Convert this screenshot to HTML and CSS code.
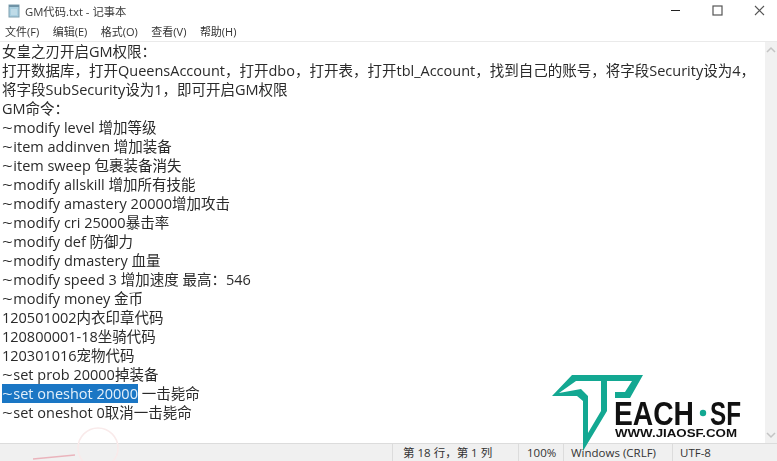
FILE: index.html
```html
<!DOCTYPE html>
<html lang="zh-CN">
<head>
  <meta charset="UTF-8">
  <title>GM代码.txt - 记事本</title>
  <link rel="stylesheet" href="styles.css">
</head>
<body>
  <div class="window">
    <div class="titlebar">
      <svg class="file-icon" width="12" height="14" viewBox="0 0 12 14">
        <rect x="1" y="1" width="10" height="12" fill="#a9cfe0" stroke="#7f9fb0" stroke-width="1"/>
        <path d="M1 1h10v2H1z" fill="#6f93a6"/>
        <path d="M3 6h6M3 8h6M3 10h6" stroke="#d5e8f0" stroke-width="1"/>
      </svg>
      <span class="title">GM代码.txt - 记事本</span>
      <div class="controls">
        <svg width="11" height="11" viewBox="0 0 11 11"><path d="M1 5.5h9" stroke="#222" stroke-width="1"/></svg>
        <svg width="11" height="11" viewBox="0 0 11 11"><rect x="1" y="1" width="9" height="9" fill="none" stroke="#555" stroke-width="1.2"/></svg>
        <svg width="11" height="11" viewBox="0 0 11 11"><path d="M1 1l9 9M10 1l-9 9" stroke="#555" stroke-width="1.1"/></svg>
      </div>
    </div>
    <div class="menu">
      <span>文件(F)</span>
      <span>编辑(E)</span>
      <span>格式(O)</span>
      <span>查看(V)</span>
      <span>帮助(H)</span>
    </div>
    <div class="main">
      <div class="text">
        <div>女皇之刃开启GM权限：</div>
        <div>打开数据库，打开QueensAccount，打开dbo，打开表，打开tbl_Account，找到自己的账号，将字段Security设为4，</div>
        <div>将字段SubSecurity设为1，即可开启GM权限</div>
        <div>GM命令：</div>
        <div><span class="tilde">~</span>modify level 增加等级</div>
        <div><span class="tilde">~</span>item addinven 增加装备</div>
        <div><span class="tilde">~</span>item sweep 包裹装备消失</div>
        <div><span class="tilde">~</span>modify allskill 增加所有技能</div>
        <div><span class="tilde">~</span>modify amastery 20000增加攻击</div>
        <div><span class="tilde">~</span>modify cri 25000暴击率</div>
        <div><span class="tilde">~</span>modify def 防御力</div>
        <div><span class="tilde">~</span>modify dmastery 血量</div>
        <div><span class="tilde">~</span>modify speed 3 增加速度 最高：546</div>
        <div><span class="tilde">~</span>modify money 金币</div>
        <div>120501002内衣印章代码</div>
        <div>120800001-18坐骑代码</div>
        <div>120301016宠物代码</div>
        <div><span class="tilde">~</span>set prob 20000掉装备</div>
        <div><span class="selected"><span class="tilde">~</span>set oneshot 20000</span> 一击毙命</div>
        <div><span class="tilde">~</span>set oneshot 0取消一击毙命</div>
      </div>
      <div class="scrollbar">
        <svg width="12" height="8" viewBox="0 0 12 8"><path d="M2 6l4-4 4 4" fill="none" stroke="#c4c4c4" stroke-width="1.5"/></svg>
        <svg width="12" height="8" viewBox="0 0 12 8"><path d="M2 2l4 4 4-4" fill="none" stroke="#c4c4c4" stroke-width="1.5"/></svg>
      </div>
    </div>
    <div class="statusbar">
      <span class="cell cell-pos">第 18 行，第 1 列</span>
      <span class="cell cell-zoom">100%</span>
      <span class="cell cell-eol">Windows (CRLF)</span>
      <span class="cell cell-enc">UTF-8</span>
    </div>
  </div>

  <!-- faint pen marks left on the recording -->
  <svg class="marks" width="120" height="61" viewBox="0 400 120 61">
    <circle cx="98" cy="448" r="20" fill="none" stroke="#f9eaea" stroke-width="1.5"/>
    <path d="M33 459L75 455" stroke="#eab4bc" stroke-width="1.5"/>
  </svg>

  <svg class="logo" width="200" height="90" viewBox="552 372 200 90">
    <path fill="#13a892" fill-rule="evenodd" d="M552 396L572 375H643L630 398H615V392H625L632 381H607V411L583 451V401L577 396ZM576 381L559 393L581 389L588 396V433L601 411V381Z"/>
    <text class="logo-name" x="614" y="425" textLength="80" lengthAdjust="spacingAndGlyphs">EACH</text>
    <circle cx="703" cy="413" r="3.2" fill="#13a892"/>
    <text class="logo-name" x="710" y="425" textLength="31" lengthAdjust="spacingAndGlyphs">SF</text>
    <text class="logo-url" x="615" y="437" textLength="122" lengthAdjust="spacingAndGlyphs">WWW.JIAOSF.COM</text>
  </svg>
</body>
</html>
```

FILE: styles.css
```css
body {
  margin: 0;
  background: #fff;
  font-family: "Open Sans", "Noto Sans CJK SC", sans-serif;
  color: #2a2a2a;
  overflow: hidden;
}
.window {
  width: 777px;
  height: 461px;
  display: flex;
  flex-direction: column;
  filter: blur(0.3px);
}
.titlebar {
  height: 21px;
  display: flex;
  align-items: center;
  padding-left: 8px;
  font-size: 11.3px;
  color: #3a3a3a;
}
.file-icon {
  margin-right: 5px;
}
.controls {
  margin-left: auto;
  display: flex;
  gap: 31px;
  padding-right: 12px;
}
.menu {
  height: 20px;
  display: flex;
  align-items: center;
  gap: 13.5px;
  padding-left: 5px;
  font-size: 11px;
  color: #333;
  border-bottom: 1px solid #eaeaea;
}
.main {
  flex: 1;
  display: flex;
  min-height: 0;
}
.text {
  flex: 1;
  padding: 0 0 0 2px;
  font-size: 14.5px;
  line-height: 19px;
  white-space: nowrap;
}
.tilde {
  display: inline-block;
  width: 11.3px;
  transform: scaleX(1.3);
  transform-origin: left;
}
.selected {
  background: #1a76c4;
  color: #e4f0fa;
}
.scrollbar {
  width: 12px;
  background: #f1f1f1;
  display: flex;
  flex-direction: column;
  justify-content: space-between;
  padding: 4px 0;
}
.statusbar {
  height: 17px;
  background: #f0f0f0;
  border-top: 1px solid #dcdcdc;
  display: flex;
  font-size: 11.5px;
  line-height: 18px;
  color: #333;
  padding-left: 392px;
}
.cell {
  border-left: 1px solid #dcdcdc;
  padding-left: 10px;
  box-sizing: border-box;
}
.cell-pos { width: 126px; }
.cell-zoom { width: 45px; padding-left: 8px; }
.cell-eol { width: 109px; padding-left: 7px; }
.cell-enc { padding-left: 7px; }
.marks {
  position: absolute;
  left: 0;
  top: 400px;
}
.logo {
  position: absolute;
  left: 552px;
  top: 372px;
}
.logo-name {
  font-family: "Liberation Sans", sans-serif;
  font-weight: bold;
  font-size: 33px;
  fill: #111;
}
.logo-url {
  font-family: "Liberation Sans", sans-serif;
  font-weight: bold;
  font-size: 11px;
  fill: #111;
}
```
